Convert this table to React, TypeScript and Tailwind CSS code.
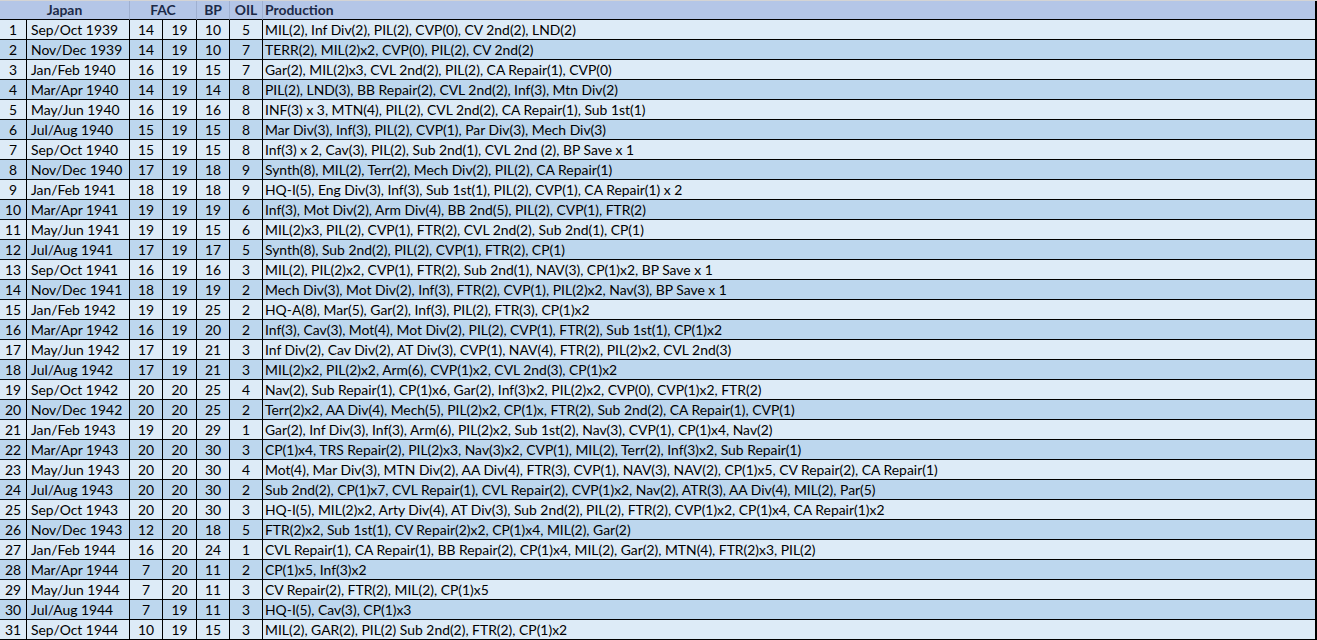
import React from "react";

type Row = [string, number, number, number, number, string];

const ROWS: Row[] = [
  ["Sep/Oct 1939", 14, 19, 10, 5, "MIL(2), Inf Div(2), PIL(2), CVP(0), CV 2nd(2), LND(2)"],
  ["Nov/Dec 1939", 14, 19, 10, 7, "TERR(2), MIL(2)x2, CVP(0), PIL(2), CV 2nd(2)"],
  ["Jan/Feb 1940", 16, 19, 15, 7, "Gar(2), MIL(2)x3, CVL 2nd(2), PIL(2), CA Repair(1), CVP(0)"],
  ["Mar/Apr 1940", 14, 19, 14, 8, "PIL(2), LND(3), BB Repair(2), CVL 2nd(2), Inf(3), Mtn Div(2)"],
  ["May/Jun 1940", 16, 19, 16, 8, "INF(3) x 3, MTN(4), PIL(2), CVL 2nd(2), CA Repair(1), Sub 1st(1)"],
  ["Jul/Aug 1940", 15, 19, 15, 8, "Mar Div(3), Inf(3), PIL(2), CVP(1), Par Div(3), Mech Div(3)"],
  ["Sep/Oct 1940", 15, 19, 15, 8, "Inf(3) x 2, Cav(3), PIL(2), Sub 2nd(1), CVL 2nd (2), BP Save x 1"],
  ["Nov/Dec 1940", 17, 19, 18, 9, "Synth(8), MIL(2), Terr(2), Mech Div(2), PIL(2), CA Repair(1)"],
  ["Jan/Feb 1941", 18, 19, 18, 9, "HQ-I(5), Eng Div(3), Inf(3), Sub 1st(1), PIL(2), CVP(1), CA Repair(1) x 2"],
  ["Mar/Apr 1941", 19, 19, 19, 6, "Inf(3), Mot Div(2), Arm Div(4), BB 2nd(5), PIL(2), CVP(1), FTR(2)"],
  ["May/Jun 1941", 19, 19, 15, 6, "MIL(2)x3, PIL(2), CVP(1), FTR(2), CVL 2nd(2), Sub 2nd(1), CP(1)"],
  ["Jul/Aug 1941", 17, 19, 17, 5, "Synth(8), Sub 2nd(2), PIL(2), CVP(1), FTR(2), CP(1)"],
  ["Sep/Oct 1941", 16, 19, 16, 3, "MIL(2), PIL(2)x2, CVP(1), FTR(2), Sub 2nd(1), NAV(3), CP(1)x2, BP Save x 1"],
  ["Nov/Dec 1941", 18, 19, 19, 2, "Mech Div(3), Mot Div(2), Inf(3), FTR(2), CVP(1), PIL(2)x2, Nav(3), BP Save x 1"],
  ["Jan/Feb 1942", 19, 19, 25, 2, "HQ-A(8), Mar(5), Gar(2), Inf(3), PIL(2), FTR(3), CP(1)x2"],
  ["Mar/Apr 1942", 16, 19, 20, 2, "Inf(3), Cav(3), Mot(4), Mot Div(2), PIL(2), CVP(1), FTR(2), Sub 1st(1), CP(1)x2"],
  ["May/Jun 1942", 17, 19, 21, 3, "Inf Div(2), Cav Div(2), AT Div(3), CVP(1), NAV(4), FTR(2), PIL(2)x2, CVL 2nd(3)"],
  ["Jul/Aug 1942", 17, 19, 21, 3, "MIL(2)x2, PIL(2)x2, Arm(6), CVP(1)x2, CVL 2nd(3), CP(1)x2"],
  ["Sep/Oct 1942", 20, 20, 25, 4, "Nav(2), Sub Repair(1), CP(1)x6, Gar(2), Inf(3)x2, PIL(2)x2, CVP(0), CVP(1)x2, FTR(2)"],
  ["Nov/Dec 1942", 20, 20, 25, 2, "Terr(2)x2, AA Div(4), Mech(5), PIL(2)x2, CP(1)x, FTR(2), Sub 2nd(2), CA Repair(1), CVP(1)"],
  ["Jan/Feb 1943", 19, 20, 29, 1, "Gar(2), Inf Div(3), Inf(3), Arm(6), PIL(2)x2, Sub 1st(2), Nav(3), CVP(1), CP(1)x4, Nav(2)"],
  ["Mar/Apr 1943", 20, 20, 30, 3, "CP(1)x4, TRS Repair(2), PIL(2)x3, Nav(3)x2, CVP(1), MIL(2), Terr(2), Inf(3)x2, Sub Repair(1)"],
  ["May/Jun 1943", 20, 20, 30, 4, "Mot(4), Mar Div(3), MTN Div(2), AA Div(4), FTR(3), CVP(1), NAV(3), NAV(2), CP(1)x5, CV Repair(2), CA Repair(1)"],
  ["Jul/Aug 1943", 20, 20, 30, 2, "Sub 2nd(2), CP(1)x7, CVL Repair(1), CVL Repair(2), CVP(1)x2, Nav(2), ATR(3), AA Div(4), MIL(2), Par(5)"],
  ["Sep/Oct 1943", 20, 20, 30, 3, "HQ-I(5), MIL(2)x2, Arty Div(4), AT Div(3), Sub 2nd(2), PIL(2), FTR(2), CVP(1)x2, CP(1)x4, CA Repair(1)x2"],
  ["Nov/Dec 1943", 12, 20, 18, 5, "FTR(2)x2, Sub 1st(1), CV Repair(2)x2, CP(1)x4, MIL(2), Gar(2)"],
  ["Jan/Feb 1944", 16, 20, 24, 1, "CVL Repair(1), CA Repair(1), BB Repair(2), CP(1)x4, MIL(2), Gar(2), MTN(4), FTR(2)x3, PIL(2)"],
  ["Mar/Apr 1944", 7, 20, 11, 2, "CP(1)x5, Inf(3)x2"],
  ["May/Jun 1944", 7, 20, 11, 3, "CV Repair(2), FTR(2), MIL(2), CP(1)x5"],
  ["Jul/Aug 1944", 7, 19, 11, 3, "HQ-I(5), Cav(3), CP(1)x3"],
  ["Sep/Oct 1944", 10, 19, 15, 3, "MIL(2), GAR(2), PIL(2) Sub 2nd(2), FTR(2), CP(1)x2"],
];

const head = "flex h-[19px] items-center justify-center border-r border-b border-r-[#9fb0d0] border-b-black font-bold";
const cell = "flex h-5 items-center border-r border-b border-black whitespace-nowrap";

export default function App() {
  return (
    <div
      className="w-[1317px] overflow-hidden border-t border-[#d4d4d4] bg-white text-[13.9px] leading-none text-black"
      style={{ fontFamily: "Lato, 'Open Sans', sans-serif" }}
    >
      <div className="grid grid-cols-[27px_103px_33px_34px_33px_33px_1fr]">
        <div className={`${head} col-span-2 bg-[#b4c6e7] text-[#1c2a48]`}>Japan</div>
        <div className={`${head} col-span-2 bg-[#b4c6e7] text-[#1c2a48]`}>FAC</div>
        <div className={`${head} bg-[#b4c6e7] text-[#1c2a48]`}>BP</div>
        <div className={`${head} bg-[#b4c6e7] text-[#1c2a48]`}>OIL</div>
        <div className={`${head} justify-start border-r-2 border-r-black bg-[#b4c6e7] pl-0.5 text-[#1c2a48]`}>
          Production
        </div>

        {ROWS.map((r, i) => {
          const bg = i % 2 === 0 ? "bg-[#ddebf7]" : "bg-[#bdd7ee]";
          return (
            <React.Fragment key={i}>
              <div className={`${cell} ${bg} justify-center`}>{i + 1}</div>
              <div className={`${cell} ${bg} pl-1`}>{r[0]}</div>
              <div className={`${cell} ${bg} justify-center`}>{r[1]}</div>
              <div className={`${cell} ${bg} justify-center`}>{r[2]}</div>
              <div className={`${cell} ${bg} justify-center`}>{r[3]}</div>
              <div className={`${cell} ${bg} justify-center`}>{r[4]}</div>
              <div className={`${cell} ${bg} border-r-2 pl-0.5`}>{r[5]}</div>
            </React.Fragment>
          );
        })}
      </div>
    </div>
  );
}
